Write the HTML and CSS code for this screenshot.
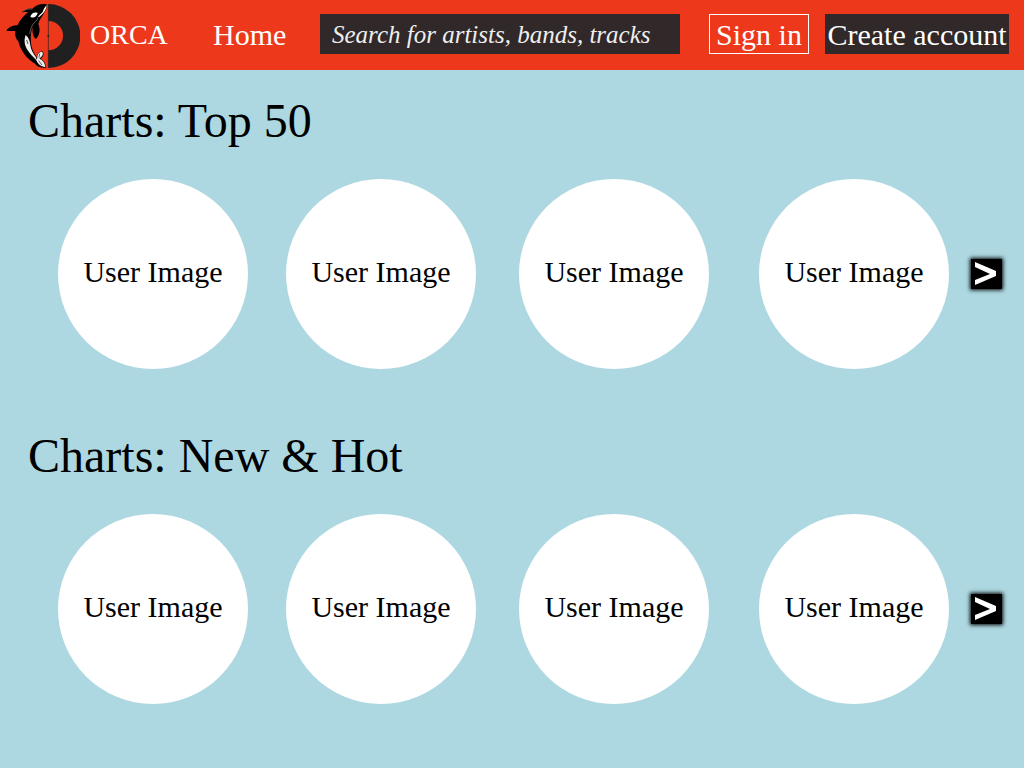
FILE: index.html
```html
<!DOCTYPE html>
<html lang="en">
<head>
<meta charset="utf-8">
<title>ORCA</title>
<link rel="stylesheet" href="styles.css">
</head>
<body>
<header class="topbar">
  <a class="brand" href="#">
    <svg class="logo" viewBox="0 0 240 210" aria-hidden="true">
      <path fill="#202020" d="M145 12a96 96 0 0 1 0 192v-53a44 44 0 0 0 0-88z"/>
      <path stroke="#202020" stroke-width="2" d="M145 12v192"/>
      <circle cx="145" cy="107" r="3" fill="#202020"/>
      <path fill="#000" d="M140 13C125 11 110 13 97 26C88 23 71 29 65 37C75 35 79 34 84 37C70 48 58 62 53 76C43 76 27 79 19 92C27 94 36 92 46 93C44 105 47 116 55 124C58 139 66 154 77 168C87 179 96 186 105 191C111 200 122 204 138 203C137 191 132 181 122 176C129 171 133 163 129 155C118 152 112 160 110 171C101 158 95 147 93 130C92 109 92 98 98 82C96 98 100 111 107 117C119 107 122 89 115 72C118 58 128 49 134 36C139 29 142 21 140 13z"/>
      <path fill="#fff" d="M91 50C94 40 104 35 113 39C110 50 101 57 91 50zM140 16C139 30 132 39 120 49C118 51 116 51 114 52C118 43 128 40 130 31C132 25 136 20 140 16z"/>
      <path fill="none" stroke="#888" stroke-width="2" d="M114 53C112 63 99 68 95 80C91 89 90 96 89 102"/>
      <path fill="#eee" d="M77 105C71 120 74 136 82 149C89 160 100 171 108 179L109 173C99 160 93 150 91 136C90 124 86 112 77 105zM112 175C111 163 117 155 127 156C132 164 124 171 118 176C129 180 135 190 136 201C121 200 113 190 108 179z"/>
      <path fill="none" stroke="#111" stroke-width="2" d="M80 120L84 132M119 161L117 173M116 182L126 195"/>
      <path fill="none" stroke="#777" stroke-width="2" d="M67 35C76 28 87 25 97 28"/>
    </svg>
    <span>ORCA</span>
  </a>
  <a class="home" href="#">Home</a>
  <input class="search" type="text" aria-label="Search for artists, bands, tracks" placeholder="Search for artists, bands, tracks">
  <button class="btn signin" type="button">Sign in</button>
  <button class="btn create" type="button">Create account</button>
</header>
<main>
  <section class="chart">
    <h1 class="title">Charts: Top 50</h1>
    <div class="row">
      <a class="avatar" href="#">User Image</a>
      <a class="avatar" href="#">User Image</a>
      <a class="avatar" href="#">User Image</a>
      <a class="avatar" href="#">User Image</a>
      <button class="next" type="button" aria-label="Next artists"><svg viewBox="0 0 30 30" aria-hidden="true"><path fill="#fff" d="M4 3L25 12V17L4 26V21L19 15L4 8z"/></svg></button>
    </div>
  </section>
  <section class="chart">
    <h2 class="title">Charts: New &amp; Hot</h2>
    <div class="row">
      <a class="avatar" href="#">User Image</a>
      <a class="avatar" href="#">User Image</a>
      <a class="avatar" href="#">User Image</a>
      <a class="avatar" href="#">User Image</a>
      <button class="next" type="button" aria-label="Next artists"><svg viewBox="0 0 30 30" aria-hidden="true"><path fill="#fff" d="M4 3L25 12V17L4 26V21L19 15L4 8z"/></svg></button>
    </div>
  </section>
</main>
</body>
</html>
```
FILE: styles.css
```css
* {
  box-sizing: border-box;
}

body {
  margin: 0;
  background: #add8e1;
  color: #000;
  font-family: "Liberation Serif", "Times New Roman", serif;
  font-size: 30px;
}

a {
  color: inherit;
  text-decoration: none;
}

.topbar {
  display: flex;
  align-items: center;
  height: 70px;
  padding-right: 15px;
  background: #ee381c;
  color: #fff;
}

.brand {
  display: flex;
  align-items: center;
  gap: 10px;
  width: 213px;
  font-size: 28px;
}

.logo {
  width: 80px;
  height: 70px;
}

.home {
  width: 107px;
}

.search,
.btn {
  height: 40px;
  margin: 0 0 2px;
  border: 0;
  border-radius: 0;
  background: #302829;
  color: #fff;
  font-family: inherit;
  font-size: 30px;
  line-height: 40px;
}

.search {
  flex: 1;
  min-width: 0;
  padding: 2px 12px 0;
  font-size: 25px;
  font-style: italic;
}

.search::placeholder {
  color: #eee;
  opacity: 1;
}

.btn {
  padding: 2px 0 0;
  white-space: nowrap;
}

.signin {
  width: 100px;
  margin-left: 29px;
  border: 1px solid #fff;
  background: transparent;
  line-height: 36px;
}

.create {
  width: 184px;
  margin-left: 16px;
  line-height: 38px;
}

.chart {
  padding: 26px 21px 36px 28px;
}

.title {
  margin: 0 0 33px;
  font-size: 48px;
  font-weight: 400;
  line-height: 50px;
}

.row {
  display: grid;
  grid-template-columns: 228fr 233fr 240fr 212fr 32px;
  align-items: center;
  padding-left: 30px;
}

.avatar {
  display: flex;
  align-items: center;
  justify-content: center;
  width: 190px;
  height: 190px;
  padding-bottom: 4px;
  border-radius: 50%;
  background: #fff;
}

.next {
  width: 31px;
  height: 30px;
  padding: 0;
  border: 0;
  background: #000;
  box-shadow: 0 0 4px 1px #000;
}

.next svg {
  display: block;
  width: 30px;
  height: 30px;
}
```
